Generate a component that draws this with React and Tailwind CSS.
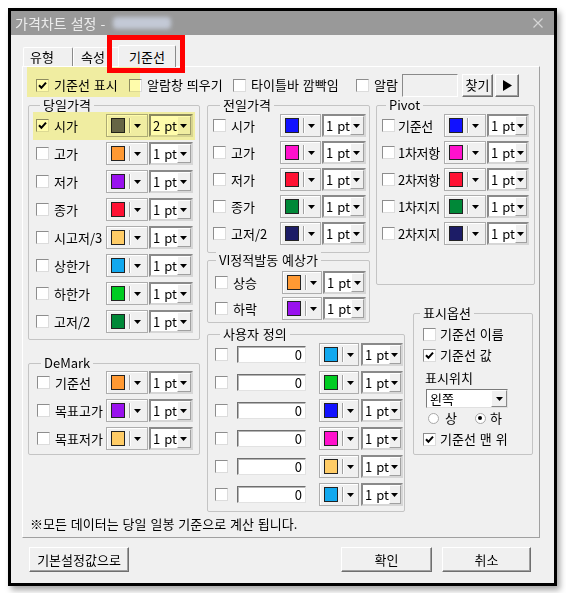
import React from 'react';

const today = [
  ['시가', 'bg-[#666666]', true, '2'],
  ['고가', 'bg-[#ff9933]'],
  ['저가', 'bg-[#9911ee]'],
  ['종가', 'bg-[#ff1133]'],
  ['시고저/3', 'bg-[#ffcc66]'],
  ['상한가', 'bg-[#11a8ee]'],
  ['하한가', 'bg-[#00cc22]'],
  ['고저/2', 'bg-[#008838]'],
];

const yesterday = [
  ['시가', 'bg-[#1111ff]'],
  ['고가', 'bg-[#ff11cc]'],
  ['저가', 'bg-[#ff1133]'],
  ['종가', 'bg-[#008838]'],
  ['고저/2', 'bg-[#1c1c66]'],
];

const vi = [
  ['상승', 'bg-[#ff9933]'],
  ['하락', 'bg-[#9911ee]'],
];

const pivot = [
  ['기준선', 'bg-[#1111ff]'],
  ['1차저항', 'bg-[#ff11cc]'],
  ['2차저항', 'bg-[#ff1133]'],
  ['1차지지', 'bg-[#008838]'],
  ['2차지지', 'bg-[#1c1c66]'],
];

const demark = [
  ['기준선', 'bg-[#ff9933]'],
  ['목표고가', 'bg-[#9911ee]'],
  ['목표저가', 'bg-[#ffcc66]'],
];

const custom = ['bg-[#11a8ee]', 'bg-[#00cc22]', 'bg-[#1111ff]', 'bg-[#ff11cc]', 'bg-[#ffcc66]', 'bg-[#11a8ee]'];

const btn =
  'flex items-center justify-center border border-t-white border-l-white border-b-[#6f6f6f] border-r-[#6f6f6f] bg-[#f0f0f0] shadow-[inset_-1px_-1px_0_#a0a0a0]';

const Tri = ({ cls = '' }) => (
  <svg width="7" height="4" viewBox="0 0 7 4" className={cls}>
    <polygon points="0,0 7,0 3.5,4" fill="#000" />
  </svg>
);

function Check({ on }) {
  return (
    <span className="flex h-[13px] w-[13px] shrink-0 items-center justify-center border border-t-[#8d8d8d] border-l-[#8d8d8d] border-b-[#dcdcdc] border-r-[#dcdcdc] bg-white">
      {on && (
        <svg width="9" height="9" viewBox="0 0 9 9">
          <path d="M1 4.3 L3.4 6.8 L8 1.6" fill="none" stroke="#000" strokeWidth="2" />
        </svg>
      )}
    </span>
  );
}

function Radio({ on }) {
  return (
    <span className="flex h-[11px] w-[11px] shrink-0 items-center justify-center rounded-full border border-[#a8a8a8] bg-white">
      {on && <span className="h-[4px] w-[4px] rounded-full bg-black" />}
    </span>
  );
}

function ColorBtn({ swatch, w }) {
  return (
    <div className={`flex h-[23px] shrink-0 items-center border border-[#adadad] bg-[#f0f0f0] shadow-[inset_1px_1px_0_#fff] ${w}`}>
      <span className={`ml-[4px] h-[15px] w-[14px] border border-[#222] ${swatch}`} />
      <span className="ml-[4px] h-[15px] w-[2px] border-l border-[#a0a0a0] bg-white" />
      <Tri cls="ml-[3px]" />
    </div>
  );
}

function Pt({ v = '1', w }) {
  return (
    <div className={`ml-[1px] flex h-[23px] shrink-0 border-2 border-t-[#8a8a8a] border-l-[#8a8a8a] border-b-[#d6d6d6] border-r-[#d6d6d6] ${w}`}>
      <span className="flex flex-1 items-center whitespace-nowrap bg-white pl-[2px] leading-none">{v} pt</span>
      <span className="flex w-[16px] items-center justify-center border border-t-white border-l-white border-b-[#a0a0a0] border-r-[#a0a0a0] bg-[#f0f0f0]">
        <Tri />
      </span>
    </div>
  );
}

function Row({ label, swatch, on = false, pt = '1', pl, lw, cw, pw, lp = 'pl-[5px]' }) {
  return (
    <div className={`flex h-[23px] shrink-0 items-center ${pl}`}>
      <Check on={on} />
      <span className={`shrink-0 whitespace-nowrap ${lp} ${lw}`}>{label}</span>
      <ColorBtn swatch={swatch} w={cw} />
      <Pt v={pt} w={pw} />
    </div>
  );
}

function Group({ title, tl, className, children }) {
  return (
    <div className={`relative flex shrink-0 flex-col rounded-[2px] border border-[#c4c4c4] ${className}`}>
      <span className={`absolute -top-[9px] bg-[#f0f0f0] px-[3px] leading-[16px] ${tl}`}>{title}</span>
      {children}
    </div>
  );
}

function Labeled({ on, text, w }) {
  return (
    <div className={`flex shrink-0 items-center ${w}`}>
      <Check on={on} />
      <span className="ml-[5px] whitespace-nowrap">{text}</span>
    </div>
  );
}

export default function App() {
  return (
    <div className="relative h-[593px] w-[566px] overflow-hidden bg-white pl-[8px] pt-[8px] font-['Noto_Sans_CJK_KR',sans-serif] text-[13px] text-black [word-spacing:1px]">
      <div className="flex h-[578px] w-[549px] flex-col border-[3px] border-black bg-[#f0f0f0] shadow-[3px_4px_6px_rgba(0,0,0,0.35)]">
        {/* title bar */}
        <div className="flex h-[24px] shrink-0 items-center bg-[#999999] pl-[4px] text-[14px] text-[#ececec]">
          <span>가격차트 설정 -</span>
          <span className="ml-[8px] h-[12px] w-[58px] rounded-sm bg-[#c3c9d6] blur-[2px]" />
          <svg width="10" height="10" viewBox="0 0 10 10" className="ml-auto mr-[11px]">
            <path d="M0.5 0.5 L9.5 9.5 M9.5 0.5 L0.5 9.5" stroke="#d6d6d6" strokeWidth="1.2" />
          </svg>
        </div>

        {/* tabs */}
        <div className="ml-[12px] mt-[10px] flex h-[21px] shrink-0 items-end">
          <div className="flex h-[19px] w-[50px] items-center rounded-t-[2px] border border-b-0 border-t-white border-l-white border-r-[#8a8a8a] pl-[6px]">유형</div>
          <div className="flex h-[19px] w-[47px] items-center rounded-t-[2px] border border-b-0 border-t-white border-l-white border-r-[#8a8a8a] pl-[7px]">속성</div>
          <div className="relative z-10 -mb-[1px] -ml-[2px] flex h-[22px] w-[58px] items-center justify-center rounded-t-[2px] border border-b-0 border-t-white border-l-white border-r-[#8a8a8a] bg-[#f0f0f0]">기준선</div>
        </div>

        {/* panel */}
        <div className="ml-[11px] flex h-[472px] w-[518px] shrink-0 flex-col border border-t-white border-l-white border-r-[#a0a0a0] border-b-[#a0a0a0]">
          <div className="mt-[6px] flex h-[24px] items-center pl-[13px]">
            <Labeled on text="기준선 표시" w="w-[93px]" />
            <Labeled text="알람창 띄우기" w="w-[104px]" />
            <Labeled text="타이틀바 깜빡임" w="w-[123px]" />
            <Labeled text="알람" w="w-[46px]" />
            <div className="h-[23px] w-[56px] border border-t-[#8a8a8a] border-l-[#8a8a8a] border-b-white border-r-white bg-[#f0f0f0]" />
            <div className={`ml-[4px] h-[23px] w-[31px] ${btn}`}>찾기</div>
            <div className={`ml-[2px] h-[23px] w-[24px] ${btn}`}>
              <svg width="9" height="11" viewBox="0 0 9 11">
                <polygon points="0,0 9,5.5 0,11" fill="#000" />
              </svg>
            </div>
          </div>

          <div className="mt-[8px] flex items-start pl-[5px]">
            {/* left column */}
            <div className="flex w-[172px] shrink-0 flex-col">
              <Group title="당일가격" tl="left-[11px]" className="h-[235px] gap-[5px] pt-[8px]">
                {today.map(([l, s, on, pt]) => (
                  <Row key={l} label={l} swatch={s} on={on} pt={pt} pl="pl-[7px]" lw="w-[57px]" cw="w-[42px]" pw="w-[44px]" />
                ))}
              </Group>
              <Group title="DeMark" tl="left-[12px]" className="mt-[23px] h-[92px] gap-[5px] pt-[7px]">
                {demark.map(([l, s]) => (
                  <Row key={l} label={l} swatch={s} pl="pl-[8px]" lw="w-[56px]" cw="w-[42px]" pw="w-[44px]" />
                ))}
              </Group>
            </div>

            {/* middle column */}
            <div className="ml-[7px] flex w-[163px] shrink-0 flex-col">
              <Group title="전일가격" tl="left-[12px]" className="h-[148px] gap-[4px] pt-[8px]">
                {yesterday.map(([l, s]) => (
                  <Row key={l} label={l} swatch={s} pl="pl-[5px]" lw="w-[54px]" cw="w-[41px]" pw="w-[44px]" />
                ))}
              </Group>
              <Group title="VI정적발동 예상가" tl="left-[8px]" className="mt-[7px] h-[63px] gap-[3px] pt-[10px]">
                {vi.map(([l, s]) => (
                  <Row key={l} label={l} swatch={s} pl="pl-[7px]" lw="w-[54px]" cw="w-[40px]" pw="w-[43px]" />
                ))}
              </Group>
              <Group title="사용자 정의" tl="left-[12px]" className="mt-[11px] h-[178px] w-[198px] gap-[5px] pt-[8px]">
                {custom.map((s, i) => (
                  <div key={i} className="flex h-[23px] shrink-0 items-center pl-[7px]">
                    <Check />
                    <div className="ml-[9px] flex h-[17px] w-[69px] items-center justify-end border border-t-[#6e6e6e] border-l-[#6e6e6e] border-b-[#e2e2e2] border-r-[#e2e2e2] bg-white pr-[3px] shadow-[inset_1px_1px_0_#b4b4b4]">0</div>
                    <div className="ml-[13px]">
                      <ColorBtn swatch={s} w="w-[40px]" />
                    </div>
                    <div className="ml-[1px]">
                      <Pt w="w-[42px]" />
                    </div>
                  </div>
                ))}
              </Group>
            </div>

            {/* right column */}
            <div className="ml-[6px] flex w-[159px] shrink-0 flex-col">
              <Group title="Pivot" tl="left-[9px]" className="h-[180px] gap-[4px] pt-[8px]">
                {pivot.map(([l, s]) => (
                  <Row key={l} label={l} swatch={s} pl="pl-[5px]" lp="pl-[3px] tracking-[-0.3px]" lw="w-[49px]" cw="w-[42px]" pw="w-[42px]" />
                ))}
              </Group>
              <Group title="표시옵션" tl="left-[6px]" className="ml-[37px] mt-[28px] h-[142px] w-[120px] pl-[9px]">
                <div className="mt-[10px] flex h-[20px] items-center">
                  <Check />
                  <span className="ml-[4px]">기준선 이름</span>
                </div>
                <div className="mt-[1px] flex h-[20px] items-center">
                  <Check on />
                  <span className="ml-[4px]">기준선 값</span>
                </div>
                <div className="mt-[3px] flex h-[20px] items-center pl-[2px]">표시위치</div>
                <div className="ml-[3px] mt-[1px] flex h-[19px] w-[82px] border border-t-[#7a7a7a] border-l-[#7a7a7a] border-b-[#e0e0e0] border-r-[#e0e0e0] bg-white">
                  <span className="flex flex-1 items-center pl-[3px]">왼쪽</span>
                  <span className="flex w-[16px] items-center justify-center border border-t-white border-l-white border-b-[#8a8a8a] border-r-[#8a8a8a] bg-[#f0f0f0]">
                    <Tri />
                  </span>
                </div>
                <div className="mt-[1px] flex h-[18px] items-center pl-[5px]">
                  <Radio />
                  <span className="ml-[6px]">상</span>
                  <span className="ml-[18px]">
                    <Radio on />
                  </span>
                  <span className="ml-[4px]">하</span>
                </div>
                <div className="mt-[2px] flex h-[20px] items-center">
                  <Check on />
                  <span className="ml-[4px]">기준선 맨 위</span>
                </div>
              </Group>
            </div>
          </div>

          <div className="mt-[4px] h-[16px] pl-[7px] leading-[16px]">※모든 데이터는 당일 일봉 기준으로 계산 됩니다.</div>
        </div>

        {/* bottom buttons */}
        <div className="mt-[9px] flex h-[25px] shrink-0 pl-[18px]">
          <div className={`w-[100px] ${btn}`}>기본설정값으로</div>
          <div className={`ml-[212px] w-[91px] ${btn}`}>확인</div>
          <div className={`ml-[10px] w-[89px] ${btn}`}>취소</div>
        </div>
      </div>

      {/* highlight marks over the screenshot */}
      <div className="pointer-events-none absolute left-[27px] top-[67px] h-[30px] w-[113px] bg-[#fffcab] mix-blend-multiply" />
      <div className="pointer-events-none absolute left-[33px] top-[112px] h-[28px] w-[162px] bg-[#fffcab] mix-blend-multiply" />
      <div className="pointer-events-none absolute left-[107px] top-[35px] h-[38px] w-[78px] border-[5px] border-[#ff0000]" />
    </div>
  );
}
